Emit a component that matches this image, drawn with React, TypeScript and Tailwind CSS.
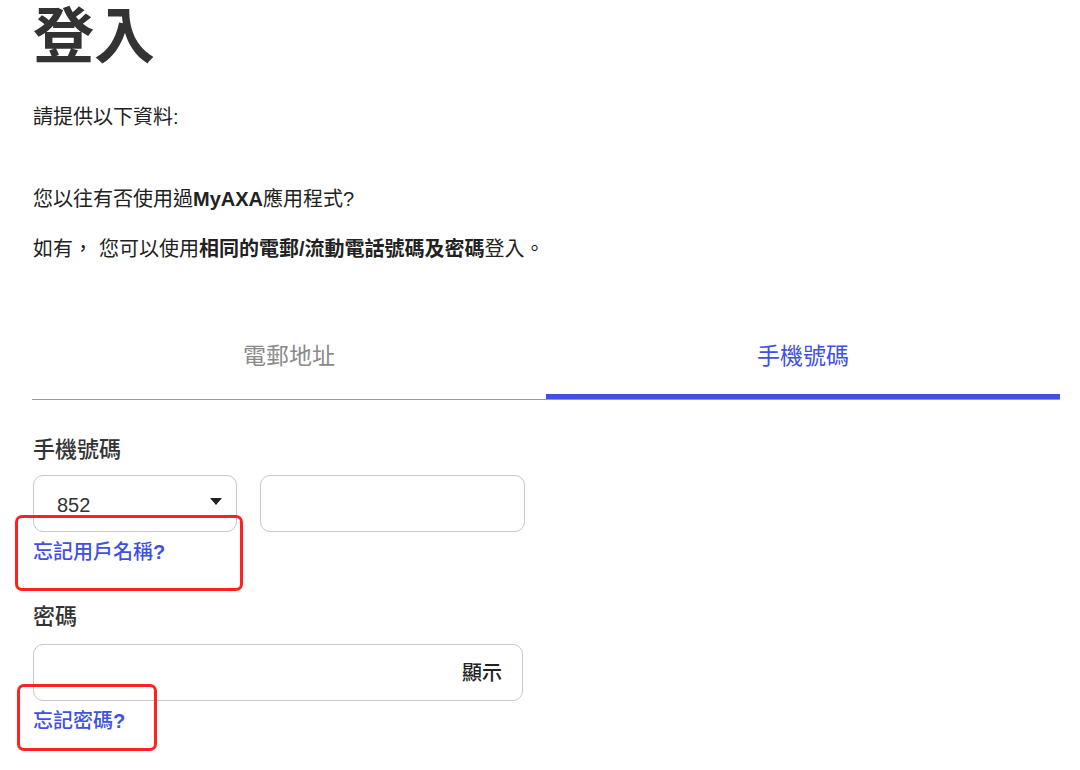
import { useState } from "react";

/**
 * Login screen (Traditional Chinese) with email / mobile tabs.
 * Red outlines are review annotations drawn over the form.
 */

type Tab = "email" | "phone";

export default function App() {
  const [tab, setTab] = useState<Tab>("phone");
  const [showPw, setShowPw] = useState(false);

  return (
    <div className="relative min-h-[770px] w-[1080px] bg-white pl-[33px] pr-[20px] text-[#222] font-['Liberation_Sans','Noto_Sans_CJK_TC',sans-serif]">
      {/* Heading */}
      <h1 className="h-[74px] text-[61px] font-bold leading-[74px] text-[#333]">登入</h1>

      <p className="mt-[28px] text-[20px] leading-[30px]">請提供以下資料:</p>

      <p className="mt-[52px] text-[20px] leading-[30px]">
        您以往有否使用過<b className="font-bold">MyAXA</b>應用程式?
      </p>
      <p className="mt-[20px] text-[20px] leading-[30px]">
        如有，<span className="ml-[6px]">您可以使用</span>
        <b className="font-bold">相同的電郵/流動電話號碼及密碼</b>登入。
      </p>

      {/* Tabs */}
      <div className="mt-[52px] ml-[-1px] grid grid-cols-2 border-b border-[#9a9a9a]" role="tablist">
        <TabButton label="電郵地址" active={tab === "email"} onClick={() => setTab("email")} />
        <TabButton label="手機號碼" active={tab === "phone"} onClick={() => setTab("phone")} />
      </div>

      {/* Mobile number */}
      <div className="mt-[35px] text-[22px] font-medium leading-[30px] text-[#333]">手機號碼</div>
      <div className="mt-[10px] flex gap-[23px]">
        <div className="flex h-[57px] w-[204px] items-center justify-between rounded-[10px] border border-[#c9c9c9] pl-[23px] pr-[14px]">
          <span className="pt-[3px] text-[20px] text-[#333]">852</span>
          <svg width="12" height="7" viewBox="0 0 12 7" className="mt-[-4px]">
            <path d="M0 0h12L6 7z" fill="#222" />
          </svg>
        </div>
        <input
          type="tel"
          className="h-[57px] w-[265px] rounded-[10px] border border-[#c9c9c9] px-4 text-[20px] outline-none"
        />
      </div>
      <a className="mt-[6px] block text-[20px] font-medium leading-[28px] text-[#4050e6]">
        忘記用戶名稱<span className="font-bold">?</span>
      </a>

      {/* Password */}
      <div className="mt-[36px] text-[22px] font-medium leading-[30px] text-[#333]">密碼</div>
      <div className="mt-[12px] flex h-[57px] w-[490px] items-center rounded-[10px] border border-[#c9c9c9] pl-4 pr-[20px]">
        <input
          type={showPw ? "text" : "password"}
          className="h-full min-w-0 flex-1 bg-transparent text-[20px] outline-none"
        />
        <button
          type="button"
          onClick={() => setShowPw(!showPw)}
          className="text-[20px] font-medium text-[#222]"
        >
          顯示
        </button>
      </div>
      <a className="mt-[6px] block text-[20px] font-medium leading-[28px] text-[#4050e6]">
        忘記密碼<span className="font-bold">?</span>
      </a>

      {/* Annotation outlines */}
      <div className="pointer-events-none absolute left-[15px] top-[515px] h-[76px] w-[228px] rounded-[7px] border-[3px] border-[#ff2020]" />
      <div className="pointer-events-none absolute left-[17px] top-[684px] h-[67px] w-[140px] rounded-[7px] border-[3px] border-[#ff2020]" />
    </div>
  );
}

function TabButton({ label, active, onClick }: { label: string; active: boolean; onClick: () => void }) {
  return (
    <button
      type="button"
      role="tab"
      aria-selected={active}
      onClick={onClick}
      className={`border-b-[5px] pt-[25px] pb-[23px] text-[23px] leading-[30px] ${
        active ? "border-[#4050e6] text-[#4050e6]" : "border-transparent text-[#8a8a8a]"
      }`}
    >
      {label}
    </button>
  );
}
